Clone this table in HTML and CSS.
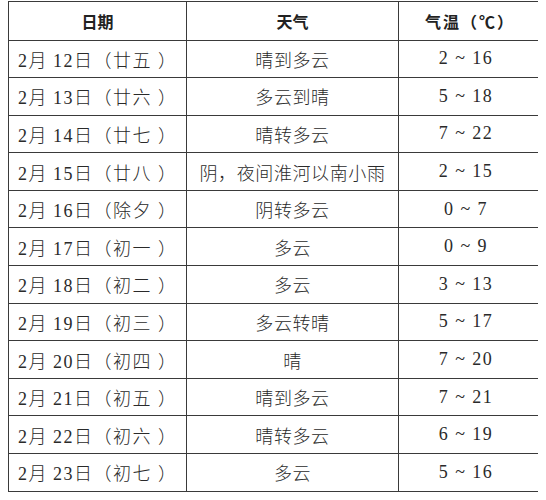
FILE: index.html
```html
<!DOCTYPE html>
<html lang="zh">
<head>
<meta charset="utf-8">
<link rel="stylesheet" href="styles.css">
</head>
<body>
<table class="weather">
  <thead>
    <tr><th class="c-date">日期</th><th class="c-wx">天气</th><th class="c-temp">气温（℃）</th></tr>
  </thead>
  <tbody>
    <tr><td class="date">2月&#8201;12日（廿五&nbsp;）</td><td class="wx">晴到多云</td><td class="temp">2 ~ 16</td></tr>
    <tr><td class="date">2月&#8201;13日（廿六&nbsp;）</td><td class="wx">多云到晴</td><td class="temp">5 ~ 18</td></tr>
    <tr><td class="date">2月&#8201;14日（廿七&nbsp;）</td><td class="wx">晴转多云</td><td class="temp">7 ~ 22</td></tr>
    <tr><td class="date">2月&#8201;15日（廿八&nbsp;）</td><td class="wx">阴，夜间淮河以南小雨</td><td class="temp">2 ~ 15</td></tr>
    <tr><td class="date">2月&#8201;16日（除夕&nbsp;）</td><td class="wx">阴转多云</td><td class="temp">0 ~ 7</td></tr>
    <tr><td class="date">2月&#8201;17日（初一&nbsp;）</td><td class="wx">多云</td><td class="temp">0 ~ 9</td></tr>
    <tr><td class="date">2月&#8201;18日（初二&nbsp;）</td><td class="wx">多云</td><td class="temp">3 ~ 13</td></tr>
    <tr><td class="date">2月&#8201;19日（初三&nbsp;）</td><td class="wx">多云转晴</td><td class="temp">5 ~ 17</td></tr>
    <tr><td class="date">2月&#8201;20日（初四&nbsp;）</td><td class="wx">晴</td><td class="temp">7 ~ 20</td></tr>
    <tr><td class="date">2月&#8201;21日（初五&nbsp;）</td><td class="wx">晴到多云</td><td class="temp">7 ~ 21</td></tr>
    <tr><td class="date">2月&#8201;22日（初六&nbsp;）</td><td class="wx">晴转多云</td><td class="temp">6 ~ 19</td></tr>
    <tr><td class="date">2月&#8201;23日（初七&nbsp;）</td><td class="wx">多云</td><td class="temp">5 ~ 16</td></tr>
  </tbody>
</table>
</body>
</html>
```
FILE: styles.css
```css
html, body {
  background: #ffffff;
}
body {
  margin: 1px 8px 8px 8px;
  font-family: "Liberation Serif", "Noto Sans CJK SC", serif;
  color: #2a2a2a;
  text-spacing-trim: space-all;
}
.weather {
  border-collapse: collapse;
  width: 530px;
  table-layout: fixed;
}
.weather th,
.weather td {
  border: 1px solid #3a3a3a;
  padding: 0;
  white-space: nowrap;
}
.weather th {
  height: 37.5px;
  font-family: "Noto Sans CJK SC", sans-serif;
  font-size: 16px;
  font-weight: 700;
  color: #222;
  text-align: center;
}
.c-date { width: 177px; }
.c-wx { width: 211px; }
.weather th.c-temp {
  width: 142px;
  letter-spacing: 2px;
  padding-right: 4px;
}
.weather td {
  height: 36.6px;
  font-size: 18px;
  font-weight: 300;
}
.weather td.date {
  text-align: left;
  padding-left: 9px;
  letter-spacing: 1.5px;
}
.wx {
  text-align: center;
  letter-spacing: 0.6px;
}
.weather td.temp {
  text-align: center;
  letter-spacing: 1.5px;
  padding-right: 12px;
}
```
